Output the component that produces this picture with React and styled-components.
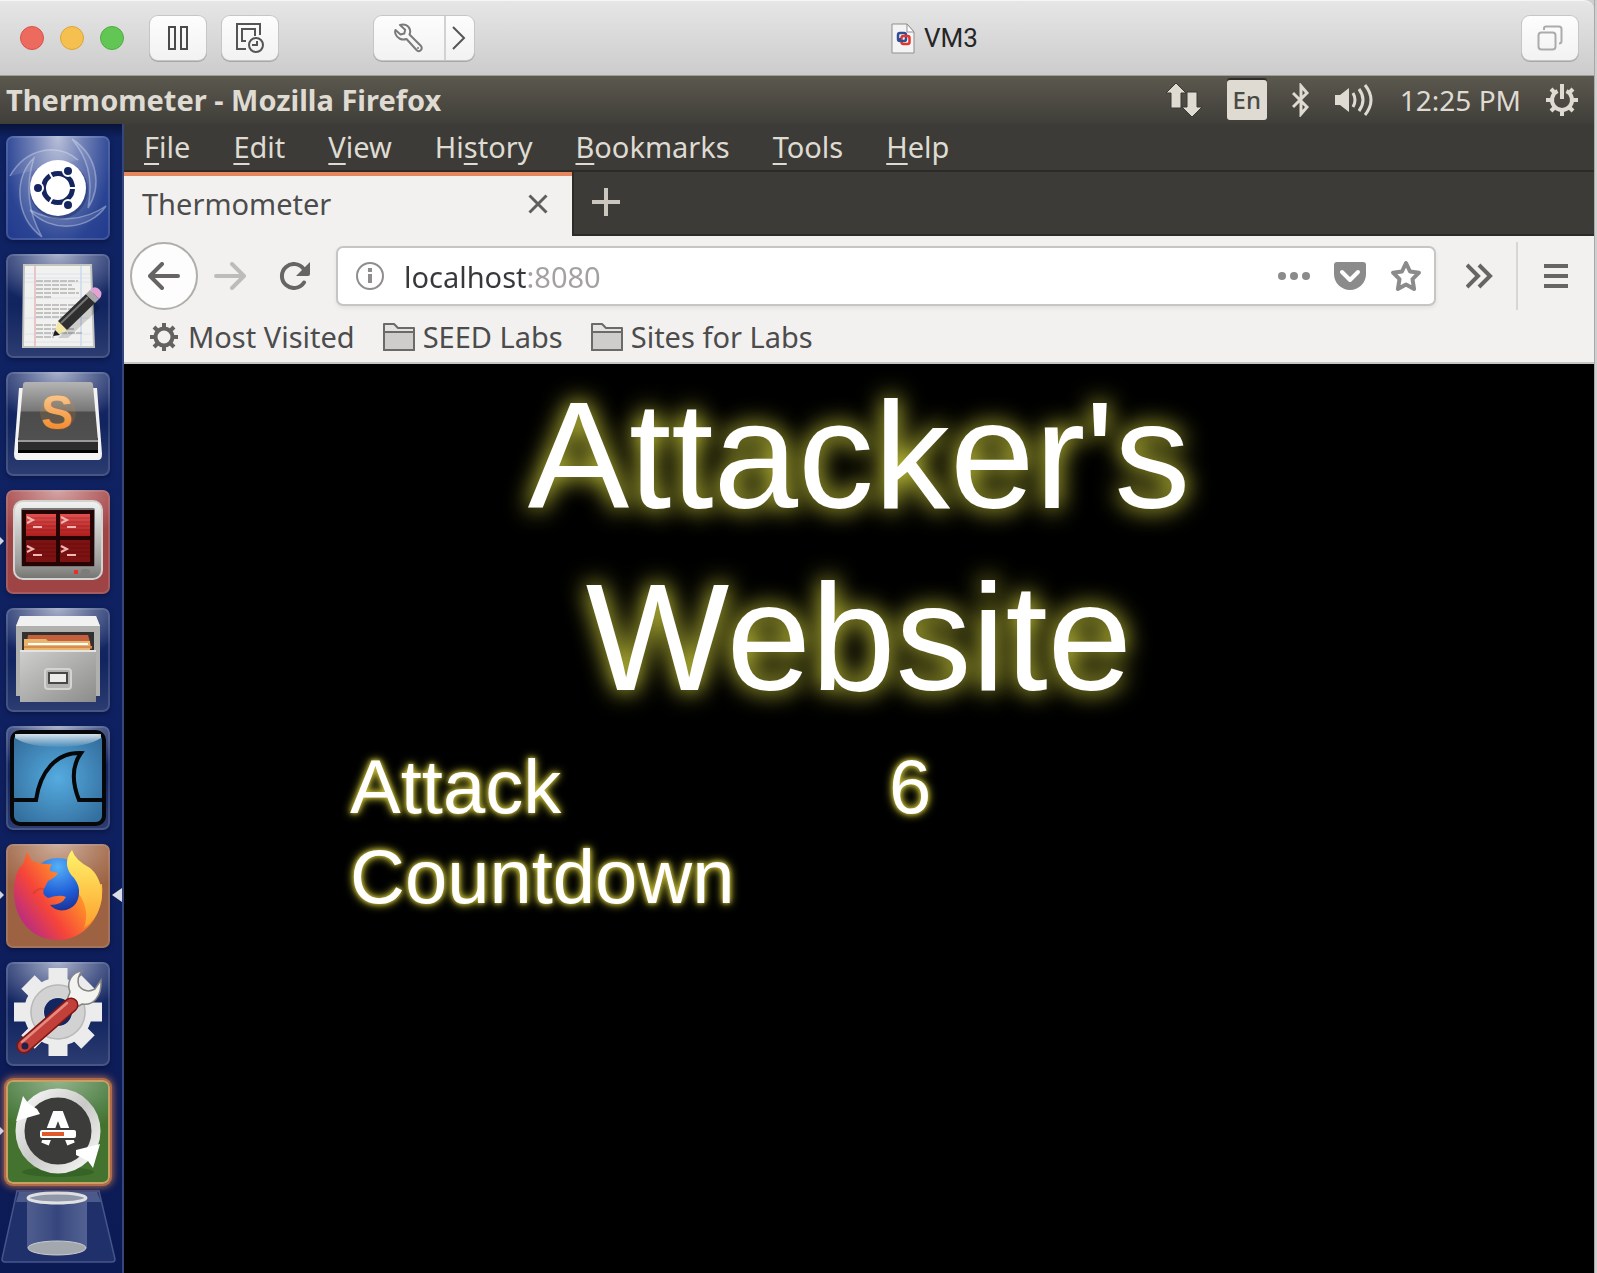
import React from "react";
import styled, { createGlobalStyle, css } from "styled-components";

const GlobalStyle = createGlobalStyle`
  *, *::before, *::after { box-sizing: border-box; }
  body { margin: 0; background: #cfcfcf; }
  button, input { font: inherit; color: inherit; }
  button { border: 0; padding: 0; background: none; cursor: pointer; }
  svg { display: block; flex: none; }
`;

const uiFont = `"Noto Sans", "Open Sans", sans-serif`;

const Window = styled.div`
  min-height: 100vh;
  display: flex;
  flex-direction: column;
  margin-right: 3px;
  box-shadow: 1px 0 0 #a9a9a9;
  font-family: ${uiFont};
`;

/* ---------- host title bar ---------- */

const TitleBar = styled.header`
  height: 76px;
  flex: none;
  display: flex;
  align-items: center;
  padding: 0 16px 0 20px;
  border-top: 1px solid #f6f6f6;
  border-bottom: 1px solid #9d9d9b;
  border-top-right-radius: 10px;
  background: linear-gradient(#e6e6e6, #cccccc);
`;

const Lights = styled.div`
  display: flex;
  gap: 16px;
  margin-right: 26px;
`;

const Light = styled.button`
  width: 24px;
  height: 24px;
  border-radius: 50%;
  border: 1px solid ${(p) => p.$edge};
  background: ${(p) => p.$fill};
`;

const macButton = css`
  height: 44px;
  border-radius: 8px;
  background: linear-gradient(#fdfdfd, #f2f2f2);
  box-shadow: 0 0 0 1px #c6c6c6, 0 1px 0 1px #a8a8a8;
`;

const MacButton = styled.button`
  ${macButton}
  width: 56px;
  display: grid;
  place-items: center;
`;

const MacButtons = styled.div`
  display: flex;
  gap: 16px;
  margin-right: 96px;
`;

const SplitButton = styled.div`
  ${macButton}
  display: flex;
  width: 100px;
`;

const SplitPart = styled.button`
  width: ${(p) => p.$width}px;
  display: grid;
  place-items: center;
  & + & { border-left: 2px solid #d2d2d2; }
`;

const VmTitle = styled.div`
  flex: 1;
  display: flex;
  align-items: center;
  justify-content: center;
  gap: 9px;
  padding-right: 127px;
  font: 26px/32px Roboto, sans-serif;
  color: #262626;
`;

/* ---------- guest desktop panel ---------- */

const Panel = styled.div`
  height: 48px;
  flex: none;
  display: flex;
  align-items: center;
  justify-content: space-between;
  padding: 0 16px 0 6px;
  background: linear-gradient(#5b584e, #3f3e39);
  color: #dfdbd2;
`;

const PanelTitle = styled.h1`
  margin: 0;
  font-size: 29px;
  line-height: 40px;
  font-weight: 700;
`;

const Indicators = styled.div`
  display: flex;
  align-items: center;
  gap: 25px;
  font-size: 28px;
  line-height: 40px;
`;

const Keyboard = styled.button`
  width: 40px;
  height: 40px;
  border-radius: 3px;
  background: #dfdbd2;
  box-shadow: 0 -2px 0 #2e2d29;
  color: #4a4943;
  font-size: 24px;
  font-weight: 500;
  line-height: 40px;
`;

const Desktop = styled.div`
  flex: 1;
  display: flex;
`;

/* ---------- launcher ---------- */

const Launcher = styled.nav`
  width: 124px;
  flex: none;
  display: flex;
  flex-direction: column;
  padding: 12px 0 0;
  border-right: 2px solid #35477a;
  background: linear-gradient(#08123a, #0f2363 14px, #0f2060 60%, #0c1a54);
  overflow: hidden;
`;

const TileList = styled.ul`
  list-style: none;
  margin: 0;
  padding: 0 12px 0 6px;
  display: flex;
  flex-direction: column;
  gap: 14px;
`;

const TileItem = styled.li`
  position: relative;
  height: 104px;
  ${(p) =>
    p.$running &&
    css`
      &::before {
        content: "";
        position: absolute;
        left: -6px;
        top: 47px;
        border: 4px solid transparent;
        border-left-color: #cfd3de;
        border-right: 0;
      }
    `}
  ${(p) =>
    p.$focused &&
    css`
      &::after {
        content: "";
        position: absolute;
        right: -12px;
        top: 44px;
        border: 7px solid transparent;
        border-right: 10px solid #dcdee6;
        border-left: 0;
      }
    `}
`;

const tints = {
  dash: "radial-gradient(ellipse at 50% 0, #b9c0d8 0, #6f7fb6 35%, #2a4493 75%, #22398c 100%)",
  glass:
    "radial-gradient(ellipse 70% 50% at 50% 0, #a9b1ca 0, #4d5b8b 60%, transparent 100%), linear-gradient(#1a2c69, #11245f 50%, #2d3d72)",
  red: "radial-gradient(ellipse 70% 50% at 50% 0, #d5a5a5 0, #b05c5d 70%, transparent 100%), #9f4445",
  orange: "radial-gradient(ellipse 70% 50% at 50% 0, #cfae9b 0, #a97558 70%, transparent 100%), #9c6242",
  green: "radial-gradient(ellipse 80% 50% at 50% 0, #94b38d 0, #55844b 70%, transparent 100%), #44732f",
};

const Tile = styled.button`
  display: block;
  width: 104px;
  height: 104px;
  border-radius: 7px;
  background: ${(p) => tints[p.$tint]};
  box-shadow: ${(p) =>
    p.$urgent
      ? "inset 0 0 0 2px #c9a063, 0 0 0 2px #b06a48, 0 0 7px 3px #a9684f"
      : "inset 0 0 0 2px rgba(190, 200, 230, 0.18), 0 2px 5px rgba(0, 0, 20, 0.35)"};
`;

const TrashButton = styled.button`
  display: block;
  margin-top: 6px;
`;

/* ---------- browser ---------- */

const Browser = styled.main`
  flex: 1;
  min-width: 0;
  display: flex;
  flex-direction: column;
  background: #f2f1f0;
  font-size: 29px;
  line-height: 40px;
  color: #4c4c4c;
`;

const MenuBar = styled.div`
  height: 46px;
  flex: none;
  display: flex;
  align-items: center;
  gap: 43px;
  padding-left: 20px;
  background: #3c3b37;
  color: #dfdbd2;
  u {
    text-decoration-thickness: 2px;
    text-underline-offset: 5px;
    text-decoration-skip-ink: none;
  }
`;

const TabStrip = styled.div`
  height: 66px;
  flex: none;
  display: flex;
  background: #3c3b37;
  border-top: 2px solid #2c2b28;
  box-shadow: inset 0 -2px 0 #2c2b28;
`;

const Tab = styled.div`
  width: 448px;
  height: 64px;
  display: flex;
  align-items: center;
  justify-content: space-between;
  padding: 0 24px 4px 18px;
  border-top: 4px solid #e4875f;
  background: #f2f1f0;
  box-shadow: 2px 0 0 #2c2b28;
`;

const NewTab = styled.button`
  width: 68px;
  display: grid;
  place-items: center;
  padding-bottom: 4px;
`;

const NavBar = styled.div`
  height: 80px;
  flex: none;
  display: flex;
  align-items: center;
  padding-left: 6px;
`;

const NavButton = styled.button`
  width: ${(p) => p.$width}px;
  height: 68px;
  display: grid;
  place-items: center;
  color: ${(p) => (p.$faded ? "#bdbcba" : "#666564")};
`;

const BackButton = styled(NavButton)`
  border-radius: 50%;
  border: 2px solid #b0aeab;
  background: #fdfdfd;
`;

const AddressBar = styled.form`
  flex: 1;
  height: 60px;
  margin: 0 8px;
  display: flex;
  align-items: center;
  gap: 24px;
  padding: 0 12px 0 18px;
  border: 2px solid #c7c5c3;
  border-radius: 7px;
  background: #fff;
  box-shadow: 0 2px 4px rgba(0, 0, 0, 0.07);
`;

const AddressInput = styled.input.attrs({ type: "text" })`
  flex: 1;
  min-width: 0;
  height: 44px;
  margin-left: -4px;
  padding: 0;
  border: 0;
  outline: 0;
  background: linear-gradient(90deg, #38383a 123px, #a2a1a0 123px);
  background-clip: text;
  -webkit-background-clip: text;
  color: transparent;
`;

const Separator = styled.span`
  width: 2px;
  height: 68px;
  background: #d7d6d4;
`;

const BookmarksBar = styled.div`
  height: 48px;
  flex: none;
  display: flex;
  align-items: center;
  gap: 28px;
  padding: 0 0 4px 26px;
  border-bottom: 2px solid #c7c5c3;
`;

const Bookmark = styled.a`
  display: flex;
  align-items: center;
  gap: ${(p) => p.$gap}px;
  color: inherit;
  text-decoration: none;
`;

/* ---------- web page ---------- */

const Page = styled.article`
  flex: 1;
  background: #000;
  color: #fff;
  font-family: "Liberation Sans", Arial, sans-serif;
`;

const Container = styled.div`
  max-width: 1078px;
  margin: 0 auto;
`;

const Headline = styled.h2`
  margin: 0 0 14px;
  padding: 0 30px;
  font-size: 152px;
  line-height: 182px;
  font-weight: 400;
  text-align: center;
  text-shadow: 0 0 24px #ffff4c;
`;

const Countdown = styled.dl`
  margin: 0;
  display: grid;
  grid-template-columns: 1fr 1fr;
  font-size: 76px;
  line-height: 90px;
  text-shadow: 0 0 4px #c8b432, 0 0 10px #ffff4c;
`;

const CountLabel = styled.dt`
  padding: 0 30px;
`;

const CountValue = styled.dd`
  margin: 0;
  padding: 0 30px;
`;

/* ---------- drawings ---------- */

const Svg = ({ w, h = w, children, ...rest }) => (
  <svg width={w} height={h} viewBox={`0 0 ${w} ${h}`} fill="none" aria-hidden="true" {...rest}>
    {children}
  </svg>
);

const PauseIcon = () => (
  <Svg w={20} h={24} stroke="#4a4a4a" strokeWidth="2">
    <path d="M1 1h6v22h-6zM13 1h6v22h-6z" />
  </Svg>
);

const SnapshotIcon = () => (
  <Svg w={28} h={30} stroke="#555" strokeWidth="2">
    <path d="M10 26H1V1h23v11" />
    <path d="M10 18H6V6h13v7" />
    <circle cx="20" cy="22" r="7" />
    <path d="M21 18v4h-5" />
  </Svg>
);

const WrenchIcon = () => (
  <Svg w={30} h={30} stroke="#7a7a7a" strokeWidth="2" strokeLinejoin="round">
    <path d="M6 2C10 .5 15 2 16 7c.4 2 0 3.500-.5 4.500L27 23c2 3-1 6.500-4 4.500L12.500 16C8 17.500 3 15.500 1.500 11c-.5-1.500-.5-3 0-4l5 4.500 3.800-1 .9-3.800z" />
    <circle cx="24" cy="25" r="1" fill="#7a7a7a" stroke="none" />
  </Svg>
);

const ChevronIcon = () => (
  <Svg w={16} h={24} stroke="#555" strokeWidth="2">
    <path d="M1 1l11 11L1 23" />
  </Svg>
);

const VmFileIcon = () => (
  <Svg w={24} h={31}>
    <path d="M1 1h15l7 8v21H1z" fill="#f4f4f4" stroke="#8f8f8f" />
    <path d="M16 1v8h7z" fill="#fff" stroke="#8f8f8f" />
    <rect x="7" y="10" width="8" height="8" rx="2" stroke="#2c4f97" strokeWidth="2.500" />
    <rect x="10.500" y="13" width="8" height="8" rx="2" stroke="#e3342c" strokeWidth="2.500" />
    <path d="M9 15v3h3" stroke="#2c4f97" strokeWidth="2" />
  </Svg>
);

const WindowsIcon = () => (
  <Svg w={26} h={26} stroke="#ababab" strokeWidth="2">
    <rect x="1.500" y="7.500" width="17" height="17" rx="3" />
    <path d="M7 5V3.500Q7 1.500 9 1.500h13q2.500 0 2.500 2.500v12q0 2.500-2.500 2.500" />
  </Svg>
);

const NetworkIcon = () => (
  <Svg w={36} h={34} fill="#dfdbd2" stroke="#3a3934" strokeWidth="1">
    <path d="M10 0l10 10h-5v15H5V10H0z" />
    <path d="M26 34L16 24h5V9h10v15h5z" />
  </Svg>
);

const BluetoothIcon = () => (
  <Svg w={18} h={34} stroke="#dfdbd2" strokeWidth="3">
    <path d="M1 10l14 14-6 7V3l6 7L1 24" />
  </Svg>
);

const VolumeIcon = () => (
  <Svg w={40} h={34} stroke="#dfdbd2" strokeWidth="3">
    <path d="M0 12h5l9-7v24l-9-7H0z" fill="#dfdbd2" stroke="none" />
    <path d="M18 10q4 7 0 14" />
    <path d="M24 6q8 11 0 22" />
    <path d="M30 2q12 15 0 30" />
  </Svg>
);

const PowerIcon = () => (
  <Svg w={32} h={34} stroke="#dfdbd2">
    <path d="M11.500 8A10 10 0 1 0 20.500 8" strokeWidth="4" />
    <path d="M16 1v15" strokeWidth="4" />
    <path d="M0 17h5M27 17h5M16 27v6M5 6l4 4M27 6l-4 4M5 28l4-4M27 28l-4-4" strokeWidth="4" />
  </Svg>
);

const CloseIcon = () => (
  <Svg w={20} stroke="#5f5e5c" strokeWidth="3">
    <path d="M1.500 1.500l17 17M18.500 1.500l-17 17" />
  </Svg>
);

const PlusIcon = () => (
  <Svg w={28} stroke="#cbc7be" strokeWidth="4">
    <path d="M14 0v28M0 14h28" />
  </Svg>
);

const BackIcon = () => (
  <Svg w={32} h={28} stroke="currentColor" strokeWidth="4" strokeLinejoin="round" strokeLinecap="round">
    <path d="M14 2L2 14l12 12M2 14h28" />
  </Svg>
);

const ForwardIcon = () => (
  <Svg w={32} h={28} stroke="currentColor" strokeWidth="4" strokeLinejoin="round" strokeLinecap="round">
    <path d="M18 2l12 12-12 12M30 14H2" />
  </Svg>
);

const ReloadIcon = () => (
  <Svg w={32} h={28}>
    <path d="M25 7.500A12 12 0 1 0 25 20.500" stroke="currentColor" strokeWidth="4" strokeLinecap="round" />
    <path d="M31 0v12q0 2-2 2H17z" fill="currentColor" />
  </Svg>
);

const InfoIcon = () => (
  <Svg w={28} stroke="#8f8e8d">
    <circle cx="14" cy="14" r="13" strokeWidth="2" />
    <path d="M14 6v4M14 12v9" strokeWidth="4" />
  </Svg>
);

const DotsIcon = () => (
  <Svg w={32} h={8} fill="#8b8b8b">
    <circle cx="4" cy="4" r="4" />
    <circle cx="16" cy="4" r="4" />
    <circle cx="28" cy="4" r="4" />
  </Svg>
);

const PocketIcon = () => (
  <Svg w={32} h={28}>
    <path d="M3 0h26q3 0 3 3v9a16 16 0 0 1-32 0V3q0-3 3-3z" fill="#8b8b8b" />
    <path d="M8 10l8 8 8-8" stroke="#fff" strokeWidth="4" strokeLinecap="round" strokeLinejoin="round" />
  </Svg>
);

const StarIcon = () => (
  <Svg w={32} stroke="#8b8b8b" strokeWidth="4" strokeLinejoin="round">
    <path d="M16 3l4 8.500 9 1.200-6.500 6.500 1.600 9.800L16 24.500 7.900 29l1.600-9.800L3 12.700l9-1.200z" />
  </Svg>
);

const OverflowIcon = () => (
  <Svg w={28} h={26} stroke="currentColor" strokeWidth="4">
    <path d="M1 2l11 11L1 24M13 2l11 11-11 11" />
  </Svg>
);

const BurgerIcon = () => (
  <Svg w={24} h={24} stroke="currentColor" strokeWidth="4" strokeLinecap="butt">
    <path d="M0 2h24M0 12h24M0 22h24" />
  </Svg>
);

const GearIcon = () => (
  <Svg w={28} stroke="#636261">
    <circle cx="14" cy="14" r="8.500" strokeWidth="4" />
    <path d="M14 0v5M14 23v5M0 14h5M23 14h5M4 4l4 4M24 4l-4 4M4 24l4-4M24 24l-4-4" strokeWidth="4" />
  </Svg>
);

const FolderIcon = () => (
  <Svg w={32} h={28} stroke="#6b6a68" strokeWidth="2" strokeLinejoin="round">
    <path d="M1 27V1h10l4 4h16v22z" fill="#e4e3e1" />
    <path d="M1 9h30v18H1z" fill="#cfcdcb" />
  </Svg>
);

const DashArt = () => (
  <Svg w={104}>
    <g stroke="#dfe5f5" strokeOpacity=".4" strokeWidth="1.500">
      <path d="M4 40C20 12 52 6 72 24" fill="#fff" fillOpacity=".1" />
      <path d="M66 3C92 20 96 50 82 72 88 40 80 20 66 3z" fill="#fff" fillOpacity=".1" />
      <path d="M36 101C8 80 8 40 28 22 18 54 24 80 36 101z" fill="#fff" fillOpacity=".1" />
      <path d="M100 70C84 94 44 98 24 74 50 88 80 84 100 70z" fill="#fff" fillOpacity=".1" />
    </g>
    <circle cx="53" cy="54" r="29" fill="#14235a" fillOpacity=".4" />
    <circle cx="52" cy="52" r="28" fill="#fff" />
    <circle cx="52" cy="52" r="14.500" stroke="#142560" strokeWidth="5" />
    <g stroke="#fff" strokeWidth="2">
      <path d="M43 36l4 7M43 68l4-7M62 52h8" />
      <circle cx="32" cy="52" r="5" fill="#142560" />
      <circle cx="62" cy="35" r="5" fill="#142560" />
      <circle cx="62" cy="69" r="5" fill="#142560" />
    </g>
  </Svg>
);

const EditorArt = () => (
  <Svg w={104}>
    <path d="M18 11h67l3 82H17z" fill="#f1f1f0" stroke="#c3c3bf" strokeWidth="2" />
    <path d="M19 20h66M19 24h66M19 28h66M19 44h66M19 64h66M19 80h66M19 88h66" stroke="#d3deed" strokeOpacity=".7" />
    <path d="M29 12v80" stroke="#e6b9bd" strokeWidth="1.500" />
    <path d="M75 12v80" stroke="#cbd9ee" strokeWidth="1.500" />
    <path d="M30 27h42M30 31h36M30 35h40M30 39h43M30 43h16M30 51h40M30 55h43M30 59h43M30 63h42M30 71h20M30 75h38M30 79h46M30 83h18" stroke="#b3b3b1" strokeWidth="1.500" strokeDasharray="7 1" />
    <path d="M52 84L90 48l4 6-32 30z" fill="#000" fillOpacity=".15" />
    <path d="M48 82l4-15 9 9z" fill="#f3e7a2" />
    <path d="M47 82l2-6 5 5z" fill="#1d1d1d" />
    <path d="M52 67L80 40l9 9-28 27z" fill="#2f2f2f" />
    <path d="M55 69L82 43" stroke="#777" strokeWidth="2" />
    <path d="M80 40l4-4 9 9-4 4z" fill="#a9a9a9" />
    <path d="M84 36q4-5 9-1 5 5 0 10z" fill="#e2a3d4" />
  </Svg>
);

const SublimeArt = () => (
  <Svg w={104}>
    <defs>
      <linearGradient id="keyTop" x1="0" y1="0" x2="0" y2="1">
        <stop offset="0" stopColor="#b4b4b4" />
        <stop offset=".49" stopColor="#777" />
        <stop offset=".51" stopColor="#4c4c4c" />
        <stop offset="1" stopColor="#505050" />
      </linearGradient>
      <linearGradient id="sFill" x1="0" y1="0" x2="0" y2="1">
        <stop offset="0" stopColor="#fbd6a4" />
        <stop offset="1" stopColor="#f27a12" />
      </linearGradient>
    </defs>
    <path d="M13 16h78l5 66q0 6-4 6H12q-4 0-4-6z" fill="#f3f3f3" />
    <path d="M12 66h80v14H12z" fill="#2d2d2d" />
    <path d="M12 78h80v3H12z" fill="#000" />
    <path d="M20 10h64q3 0 3 3l5 56H12l5-56q0-3 3-3z" fill="url(#keyTop)" />
    <path d="M12 69h80" stroke="#9a9a9a" strokeWidth="2" />
    <circle cx="52" cy="40" r="18" fill="#c98c3a" fillOpacity=".18" />
    <text x="51" y="57" textAnchor="middle" fontFamily="Liberation Sans, Arial, sans-serif" fontSize="48" fontWeight="700" fill="url(#sFill)">S</text>
  </Svg>
);

const TerminatorArt = () => (
  <Svg w={104}>
    <defs>
      <linearGradient id="bezel" x1="0" y1="0" x2="0" y2="1">
        <stop offset="0" stopColor="#f2f2f0" />
        <stop offset=".8" stopColor="#9b9c99" />
        <stop offset="1" stopColor="#72736f" />
      </linearGradient>
      <linearGradient id="pane" x1="0" y1="0" x2="0" y2="1">
        <stop offset="0" stopColor="#e0504f" />
        <stop offset="1" stopColor="#b01d1d" />
      </linearGradient>
    </defs>
    <rect x="8" y="11" width="88" height="78" rx="9" fill="url(#bezel)" stroke="#d2d3d0" strokeWidth="2" />
    <rect x="15" y="18" width="74" height="59" rx="2" fill="#777" />
    <rect x="16" y="20" width="72" height="56" fill="#260404" />
    <path d="M20 24h30v22H20zM54 24h30v22H54z" fill="url(#pane)" />
    <path d="M20 50h30v22H20zM54 50h30v22H54z" fill="#7d1212" />
    <path d="M20 28h64M20 32h64M20 36h64M20 40h64M20 54h64M20 58h64M20 62h64M20 66h64" stroke="#3b0505" strokeOpacity=".25" />
    <g stroke="#f0b6b6" strokeWidth="2">
      <path d="M21 27l6 3-6 3M27 37h9M55 27l6 3-6 3M61 37h9M21 56l6 3-6 3M27 65h9M55 56l6 3-6 3M61 65h9" />
    </g>
    <rect x="68" y="80" width="4" height="4" fill="#ee2b2b" />
    <rect x="75" y="79" width="9" height="6" rx="3" fill="#7c7d7a" />
  </Svg>
);

const FilesArt = () => (
  <Svg w={104}>
    <defs>
      <linearGradient id="drawer" x1="0" y1="0" x2="1" y2="1">
        <stop offset="0" stopColor="#cfcfce" />
        <stop offset="1" stopColor="#8c8c8b" />
      </linearGradient>
    </defs>
    <path d="M14 8h76l4 10v70H10V18z" fill="#b0b0af" />
    <path d="M14 8h76l4 10H10z" fill="#f1f1f1" />
    <path d="M16 24h72v19H16z" fill="#33312f" />
    <path d="M22 27h60l4 14H20z" fill="#c4613c" />
    <path d="M18 31h22l2 2h42v10H18z" fill="#e9b46c" />
    <path d="M22 35h60v2H22z" fill="#fff" />
    <path d="M18 38h68v2H18z" fill="#d98c4b" />
    <path d="M14 42h76v52H14z" fill="url(#drawer)" />
    <path d="M14 43h76" stroke="#e4e4e3" strokeWidth="2" />
    <rect x="39" y="61" width="26" height="20" rx="3" fill="#b4b4b3" stroke="#d4d4d3" strokeWidth="2" />
    <rect x="43" y="65" width="18" height="10" fill="#ececeb" stroke="#474746" strokeWidth="2" />
  </Svg>
);

const SharkArt = () => (
  <Svg w={104}>
    <defs>
      <radialGradient id="sea" cx=".5" cy=".5" r=".6">
        <stop offset="0" stopColor="#55abe0" />
        <stop offset="1" stopColor="#34709f" />
      </radialGradient>
      <linearGradient id="shine" x1="0" y1="0" x2="0" y2="1">
        <stop offset="0" stopColor="#fff" stopOpacity=".8" />
        <stop offset="1" stopColor="#fff" stopOpacity=".05" />
      </linearGradient>
    </defs>
    <rect x="6" y="6" width="92" height="92" rx="8" fill="url(#sea)" stroke="#050709" strokeWidth="4" />
    <path d="M9 8h86v4q-14 9-43 9T9 12z" fill="url(#shine)" />
    <path d="M8 74h22C34 46 50 26 75 27c-10 14-8 32-2 47h23" stroke="#050709" strokeWidth="4" />
  </Svg>
);

const FirefoxArt = () => (
  <Svg w={104}>
    <defs>
      <linearGradient id="fox" x1=".9" y1=".2" x2=".1" y2=".75">
        <stop offset="0" stopColor="#ffc23a" />
        <stop offset=".35" stopColor="#ff8a2a" />
        <stop offset=".7" stopColor="#f5443a" />
        <stop offset="1" stopColor="#c02f78" />
      </linearGradient>
      <radialGradient id="globe" cx=".5" cy=".15" r=".85">
        <stop offset="0" stopColor="#55b0f7" />
        <stop offset=".55" stopColor="#1e5bd6" />
        <stop offset="1" stopColor="#1d1f78" />
      </radialGradient>
      <linearGradient id="flame" x1="0" y1="0" x2="0" y2="1">
        <stop offset="0" stopColor="#fff36a" />
        <stop offset="1" stopColor="#fda02d" />
      </linearGradient>
    </defs>
    <circle cx="52" cy="44" r="30" fill="url(#globe)" />
    <path d="M21 8l5 9q10 4 20 3-3 4-2 7l8 2q-2 4-10 8l-4 8q-3 5 4 9 12-4 18-1-4 8-16 8 6 7 16 5 14-4 13-21l23-5c3 32-18 56-44 56C26 96 8 76 8 48q0-20 9-28z" fill="url(#fox)" />
    <path d="M66 6q3 10 18 18c12 10 14 28 10 38q-4 14-16 22 6-18-5-34 1-8-5-16C60 26 58 16 66 6z" fill="url(#flame)" />
    <path d="M27 50q4-6 11-5" stroke="#c63b28" strokeWidth="2" strokeOpacity=".5" />
  </Svg>
);

const SettingsArt = () => (
  <Svg w={104}>
    <g stroke="#ececec" strokeWidth="19">
      <path d="M52 6v88M8 50h88M22 20l60 60M22 80l60-60" />
    </g>
    <circle cx="52" cy="50" r="24" stroke="#ececec" strokeWidth="20" />
    <circle cx="52" cy="50" r="21" stroke="#d2d2d2" strokeWidth="13" />
    <circle cx="52" cy="50" r="27" stroke="#b9b9b9" strokeWidth="1.500" />
    <circle cx="52" cy="50" r="14" fill="#14265f" />
    <path d="M76 9C66 10 60 20 64 30l-3 8 10 7 5-3c10 2 20-6 19-24l-6 9q-9 5-16-3-3-8 3-15z" fill="#f3f3f2" stroke="#858584" strokeWidth="1.500" />
    <path d="M65 43L18 84" stroke="#7d1712" strokeWidth="15" strokeLinecap="round" />
    <path d="M65 43L18 84" stroke="#c2403a" strokeWidth="12" strokeLinecap="round" />
    <path d="M61 41L16 80" stroke="#e78983" strokeWidth="2.500" strokeLinecap="round" />
    <circle cx="19" cy="84" r="3.500" fill="#23204a" />
  </Svg>
);

const UpdaterArt = () => (
  <Svg w={104}>
    <defs>
      <linearGradient id="ring" x1="0" y1="0" x2="1" y2="1">
        <stop offset="0" stopColor="#fafafa" />
        <stop offset=".5" stopColor="#c9c9c7" />
        <stop offset="1" stopColor="#fafafa" />
      </linearGradient>
    </defs>
    <ellipse cx="52" cy="92" rx="36" ry="5" fill="#244a18" fillOpacity=".4" />
    <circle cx="52" cy="51" r="36" fill="#3c3c3a" />
    <circle cx="52" cy="51" r="38" stroke="url(#ring)" strokeWidth="9" />
    <path d="M10 41l7-25 5 7 9 6 3 5z" fill="#fff" />
    <path d="M94 64l-7 24-5-7-12-6v-5z" fill="#fff" />
    <path d="M39 64l11-29h4l11 29" stroke="#fff" strokeWidth="8" />
    <rect x="32" y="48" width="40" height="12" fill="#3c3c3a" />
    <rect x="34" y="50" width="36" height="8" rx="2" fill="#fff" />
    <rect x="36" y="52" width="22" height="4" fill="#e0592a" />
  </Svg>
);

const TrashArt = () => (
  <Svg w={120} h={73}>
    <defs>
      <linearGradient id="bin" x1="0" y1="0" x2="1" y2="0">
        <stop offset="0" stopColor="#5a6896" stopOpacity=".8" />
        <stop offset=".5" stopColor="#36467d" />
        <stop offset="1" stopColor="#5f6d9b" stopOpacity=".8" />
      </linearGradient>
    </defs>
    <path d="M17 1h82l16 68q0 3-3 3H5q-3 0-3-3z" fill="#20306b" stroke="#46558a" strokeWidth="1.500" />
    <path d="M19 2h78l4 10H16z" fill="#8e98bb" fillOpacity=".4" />
    <path d="M27 9v49h60V9z" fill="url(#bin)" />
    <ellipse cx="57" cy="58" rx="29" ry="7" fill="#a2a8ae" stroke="#c9ccce" />
    <ellipse cx="57" cy="8" rx="29" ry="5" fill="#8f97a9" stroke="#dfe1e2" strokeWidth="3" />
  </Svg>
);

/* ---------- data ---------- */

const launcherItems = [
  { label: "Search your computer", tint: "dash", Art: DashArt },
  { label: "Text Editor", tint: "glass", Art: EditorArt },
  { label: "Sublime Text", tint: "glass", Art: SublimeArt },
  { label: "Terminator", tint: "red", Art: TerminatorArt, running: true },
  { label: "Files", tint: "glass", Art: FilesArt },
  { label: "Wireshark", tint: "glass", Art: SharkArt },
  { label: "Firefox Web Browser", tint: "orange", Art: FirefoxArt, running: true, focused: true },
  { label: "System Settings", tint: "glass", Art: SettingsArt },
  { label: "Software Updater", tint: "green", Art: UpdaterArt, running: true, urgent: true },
];

const menus = [
  ["", "F", "ile"],
  ["", "E", "dit"],
  ["", "V", "iew"],
  ["Hi", "s", "tory"],
  ["", "B", "ookmarks"],
  ["", "T", "ools"],
  ["", "H", "elp"],
];

export default function App() {
  return (
    <>
      <GlobalStyle />
      <Window>
        <TitleBar>
          <Lights>
            <Light $fill="#ed6a5f" $edge="#d9534a" aria-label="Close window" />
            <Light $fill="#f5c04f" $edge="#dba53c" aria-label="Minimize window" />
            <Light $fill="#62c655" $edge="#4fae42" aria-label="Zoom window" />
          </Lights>
          <MacButtons>
            <MacButton aria-label="Pause"><PauseIcon /></MacButton>
            <MacButton aria-label="Snapshots"><SnapshotIcon /></MacButton>
          </MacButtons>
          <SplitButton>
            <SplitPart $width={70} aria-label="Settings"><WrenchIcon /></SplitPart>
            <SplitPart $width={30} aria-label="More"><ChevronIcon /></SplitPart>
          </SplitButton>
          <VmTitle><VmFileIcon />VM3</VmTitle>
          <MacButton aria-label="Unity view"><WindowsIcon /></MacButton>
        </TitleBar>

        <Panel>
          <PanelTitle>Thermometer - Mozilla Firefox</PanelTitle>
          <Indicators>
            <NetworkIcon />
            <Keyboard>En</Keyboard>
            <BluetoothIcon />
            <VolumeIcon />
            <time>12:25 PM</time>
            <PowerIcon />
          </Indicators>
        </Panel>

        <Desktop>
          <Launcher aria-label="Launcher">
            <TileList>
              {launcherItems.map(({ label, tint, Art, running, focused, urgent }) => (
                <TileItem key={label} $running={running} $focused={focused}>
                  <Tile $tint={tint} $urgent={urgent} aria-label={label}><Art /></Tile>
                </TileItem>
              ))}
            </TileList>
            <TrashButton aria-label="Trash"><TrashArt /></TrashButton>
          </Launcher>

          <Browser>
            <MenuBar>
              {menus.map(([before, key, after]) => (
                <button key={key + after}>{before}<u>{key}</u>{after}</button>
              ))}
            </MenuBar>
            <TabStrip>
              <Tab>
                Thermometer
                <button aria-label="Close tab"><CloseIcon /></button>
              </Tab>
              <NewTab aria-label="New tab"><PlusIcon /></NewTab>
            </TabStrip>
            <NavBar>
              <BackButton $width={68} aria-label="Back"><BackIcon /></BackButton>
              <NavButton $width={64} $faded aria-label="Forward"><ForwardIcon /></NavButton>
              <NavButton $width={66} aria-label="Reload"><ReloadIcon /></NavButton>
              <AddressBar onSubmit={(e) => e.preventDefault()}>
                <InfoIcon />
                <AddressInput aria-label="Address" defaultValue="localhost:8080" />
                <button type="button" aria-label="Page actions"><DotsIcon /></button>
                <button type="button" aria-label="Save to Pocket"><PocketIcon /></button>
                <button type="button" aria-label="Bookmark this page"><StarIcon /></button>
              </AddressBar>
              <NavButton $width={72} aria-label="More tools"><OverflowIcon /></NavButton>
              <Separator />
              <NavButton $width={76} aria-label="Open menu"><BurgerIcon /></NavButton>
            </NavBar>
            <BookmarksBar>
              <Bookmark href="#most-visited" $gap={10}><GearIcon />Most Visited</Bookmark>
              <Bookmark href="#seed-labs" $gap={8}><FolderIcon />SEED Labs</Bookmark>
              <Bookmark href="#sites" $gap={8}><FolderIcon />Sites for Labs</Bookmark>
            </BookmarksBar>
            <Page>
              <Container>
                <Headline>Attacker's Website</Headline>
                <Countdown>
                  <CountLabel>Attack Countdown</CountLabel>
                  <CountValue>6</CountValue>
                </Countdown>
              </Container>
            </Page>
          </Browser>
        </Desktop>
      </Window>
    </>
  );
}
